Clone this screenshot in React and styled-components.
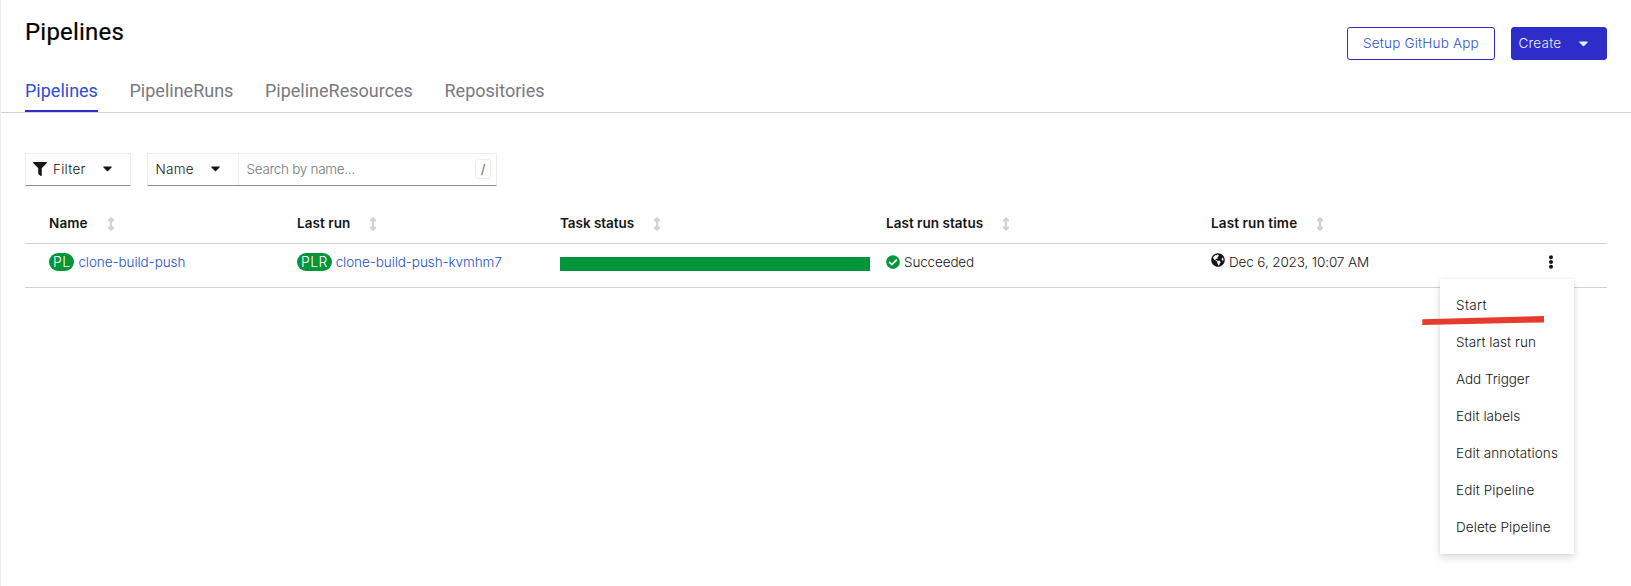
import React from 'react';
import styled, { createGlobalStyle, css } from 'styled-components';
import {
  FaFilter,
  FaCheckCircle,
  FaEllipsisV,
  FaGlobeAmericas,
} from 'react-icons/fa';

const GlobalStyle = createGlobalStyle`
  * { box-sizing: border-box; }
  body {
    margin: 0;
    background: #fff;
    color: #151515;
    font-family: Inter, Roboto, sans-serif;
    font-size: 13.5px;
    font-weight: 360;
    line-height: 21px;
  }
  svg { display: block; flex: none; }
`;

const Page = styled.main`
  position: relative;
  height: 586px;
  border-left: 1px solid #ededed;
  overflow: hidden;
`;

const Header = styled.header`
  display: flex;
  justify-content: space-between;
  height: 73px;
  padding: 14px 24px 0;
`;

const Title = styled.h1`
  margin: 0;
  font: 400 24px/36px Roboto, sans-serif;
  letter-spacing: 0.2px;
  -webkit-text-stroke: 0.2px currentColor;
  color: #000;
`;

const Actions = styled.div`
  display: flex;
  gap: 16px;
  padding-top: 13px;
`;

const Button = styled.button`
  display: flex;
  align-items: center;
  width: ${(p) => (p.$primary ? 96 : 148)}px;
  height: 33px;
  padding: 0;
  border: 1px solid #2b2bc8;
  border-radius: 3px;
  font: inherit;
  letter-spacing: 0.2px;
  white-space: nowrap;
  ${(p) =>
    p.$primary
      ? css`
          justify-content: space-between;
          padding: 0 18px 0 6.5px;
          background: #2f2dca;
          color: #e8f1fb;
        `
      : css`
          justify-content: center;
          background: #fff;
          color: #2b50cd;
        `}
`;

const Tabs = styled.nav`
  display: flex;
  gap: 31.6px;
  height: 40px;
  padding-left: 24px;
  border-bottom: 1px solid #d2d2d2;
`;

const Tab = styled.a`
  height: 39px;
  border-bottom: 2px solid ${(p) => (p.$active ? '#2f2dca' : 'transparent')};
  color: ${(p) => (p.$active ? '#2b50d5' : '#777a80')};
  font: 400 18px/36px Roboto, sans-serif;
`;

const Toolbar = styled.div`
  display: flex;
  gap: 16px;
  padding: 40px 24px 0;
`;

const Control = styled.div`
  display: flex;
  height: 33px;
  border: 1px solid #ededed;
  border-bottom-color: #8a8d90;
`;

const Toggle = styled.div`
  display: flex;
  align-items: center;
  width: ${(p) => p.$width}px;
  padding: 0 18px 1px 7px;
  letter-spacing: 0.25px;
  border-right: ${(p) => (p.$divided ? '1px solid #ededed' : '0')};

  span { margin-left: ${(p) => (p.$divided ? 0.5 : 6)}px; }
  svg:last-child { margin-left: auto; }
`;

const Search = styled.div`
  display: flex;
  align-items: center;
  justify-content: space-between;
  width: 257px;
  padding: 0 5px 1px 7.5px;
  color: #74777b;
`;

const Key = styled.kbd`
  width: 16px;
  height: 20px;
  border: 1px solid #ededed;
  border-radius: 3px;
  color: #6a6e73;
  font: 13px/18px Inter, sans-serif;
  text-align: center;
`;

const Table = styled.section`
  margin: 16px 24px 0;
`;

const Row = styled.div`
  display: grid;
  grid-template-columns: 248px 263px 326px 325px 1fr 58px;
  padding-left: 24px;
  height: ${(p) => (p.$head ? 42 : 44)}px;
  border-bottom: 1px solid #d2d2d2;
`;

const HeadCell = styled.div`
  display: flex;
  align-items: center;
  gap: 19.8px;
  padding-top: 2px;
  font-weight: 600;
  white-space: nowrap;

  svg { color: #d2d2d2; }
`;

const Cell = styled.div`
  display: flex;
  align-items: center;
  height: 35px;
  gap: 4px;
  white-space: nowrap;
`;

const Badge = styled.span`
  height: 18px;
  padding: 0 4px;
  border-radius: 9px;
  background: #009639;
  color: #fff;
  font-size: 14px;
  line-height: 18px;
  letter-spacing: 0.35px;
`;

const Progress = styled.div`
  width: 310px;
  height: 14px;
  margin-top: 5px;
  background: #009639;
`;

const Label = styled.span`
  letter-spacing: ${(p) => p.$track}px;
`;

const CellText = styled(Label)`
  padding-top: 1px;
  color: ${(p) => (p.$link ? '#2450cf' : 'inherit')};
`;

const Globe = styled(FaGlobeAmericas)`
  margin-top: -4px;
`;

const Kebab = styled(FaEllipsisV)`
  margin-left: -5px;
`;

const Menu = styled.ul`
  position: absolute;
  top: 279px;
  left: 1439px;
  width: 134px;
  margin: 0;
  padding: 8px 0;
  background: #fff;
  box-shadow: 0 4px 8px rgba(3, 3, 3, 0.12), 0 0 4px rgba(3, 3, 3, 0.08);
  list-style: none;
`;

const MenuItem = styled.li`
  height: 37px;
  padding-left: 16px;
  line-height: 37px;
  white-space: nowrap;
`;

const Stroke = styled.svg`
  position: absolute;
  top: 315px;
  left: 1421px;
`;

const columns = [
  ['Name', 0.15],
  ['Last run', 0.05],
  ['Task status', -0.05],
  ['Last run status', 0.03],
  ['Last run time', 0.12],
];

const actions = [
  ['Start', 0.35],
  ['Start last run', 0.07],
  ['Add Trigger', -0.05],
  ['Edit labels', 0.05],
  ['Edit annotations', 0.12],
  ['Edit Pipeline', 0.12],
  ['Delete Pipeline', 0.07],
];

const Caret = () => (
  <svg width="9" height="6" viewBox="0 0 9 6" fill="currentColor">
    <path d="M0.9 0.5h7.2c.6 0 .8.6.4 1L5 5.1c-.3.3-.7.3-1 0L.5 1.5c-.4-.4-.2-1 .4-1z" />
  </svg>
);

const SortIcon = () => (
  <svg width="6" height="14" viewBox="0 0 6 14" fill="currentColor">
    <path d="M2.5 0.3h1L6 2.8v1.6H4.1v5.2H6v1.6l-2.5 2.5h-1L0 11.2V9.6h1.9V4.4H0V2.8z" />
  </svg>
);

export default function App() {
  return (
    <Page>
      <GlobalStyle />
      <Header>
        <Title>Pipelines</Title>
        <Actions>
          <Button>Setup GitHub App</Button>
          <Button $primary>
            Create
            <Caret />
          </Button>
        </Actions>
      </Header>
      <Tabs>
        <Tab $active>Pipelines</Tab>
        <Tab>PipelineRuns</Tab>
        <Tab>PipelineResources</Tab>
        <Tab>Repositories</Tab>
      </Tabs>
      <Toolbar>
        <Control>
          <Toggle $width={104}>
            <FaFilter size={14} />
            <span>Filter</span>
            <Caret />
          </Toggle>
        </Control>
        <Control>
          <Toggle $width={91} $divided>
            <span>Name</span>
            <Caret />
          </Toggle>
          <Search>
            <Label $track={-0.3}>Search by name...</Label>
            <Key>/</Key>
          </Search>
        </Control>
      </Toolbar>
      <Table>
        <Row $head>
          {columns.map(([name, track]) => (
            <HeadCell key={name}>
              <Label $track={track}>{name}</Label>
              <SortIcon />
            </HeadCell>
          ))}
        </Row>
        <Row>
          <Cell>
            <Badge>PL</Badge>
            <CellText as="a" $link $track={-0.08}>clone-build-push</CellText>
          </Cell>
          <Cell>
            <Badge>PLR</Badge>
            <CellText as="a" $link $track={-0.08}>clone-build-push-kvmhm7</CellText>
          </Cell>
          <Cell>
            <Progress />
          </Cell>
          <Cell>
            <FaCheckCircle size={14} color="#009639" />
            <CellText $track={-0.14}>Succeeded</CellText>
          </Cell>
          <Cell>
            <Globe size={14} />
            <CellText $track={-0.13}>Dec 6, 2023, 10:07 AM</CellText>
          </Cell>
          <Cell>
            <Kebab size={14} />
          </Cell>
        </Row>
      </Table>
      <Menu>
        {actions.map(([name, track]) => (
          <MenuItem key={name}>
            <Label $track={track}>{name}</Label>
          </MenuItem>
        ))}
      </Menu>
      <Stroke width="123" height="11" viewBox="0 0 123 11">
        <path d="M0.3 4.2 122 1v6.4L0.3 10z" fill="#e63c30" />
      </Stroke>
    </Page>
  );
}
